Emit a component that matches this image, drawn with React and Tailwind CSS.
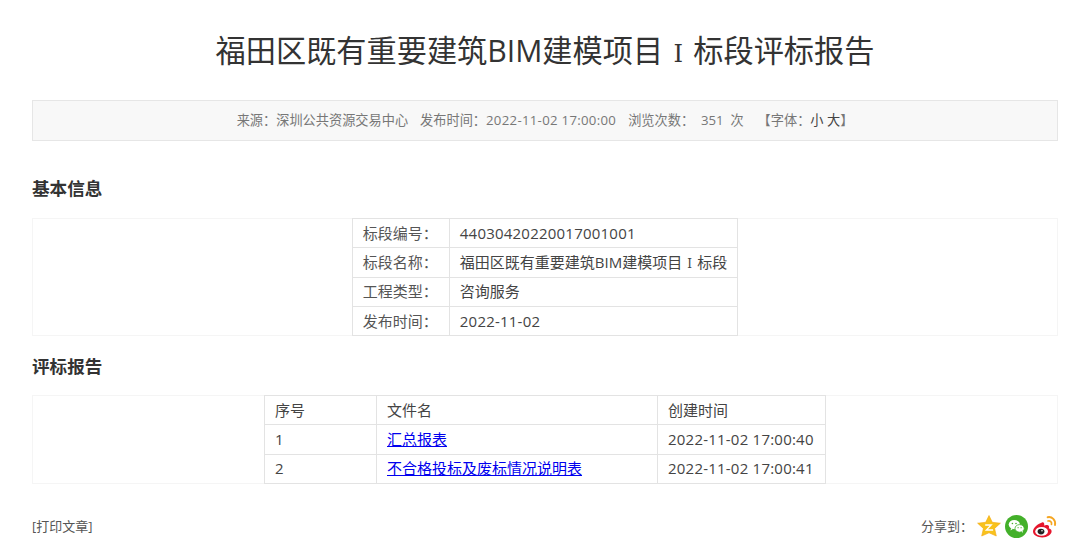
const font = "font-['Open_Sans','Noto_Sans_CJK_SC',sans-serif]";
const roman = "inline-block w-[1.25em] text-center font-['DejaVu_Serif','Liberation_Serif',serif] text-[0.8em]";
const td = "border border-[#e3e3e3] h-[29.25px] p-0 px-[10px] text-left font-normal whitespace-nowrap";
const num = "tracking-[0.22px]";
const C = "\uFF1A";

function QQ() {
  return (
    <svg width="24" height="22" viewBox="0 0 24 22">
      <path d="M12 0.5 L15.3 7.3 L23.4 8.2 L17.6 13.4 L19.3 21 L12 17.8 L4.7 21 L6.4 13.4 L0.6 8.2 L8.7 7.3 Z" fill="#f8c21c" stroke="#f3a712" strokeWidth="0.6" />
      <path d="M8.2 9.2 H15.8 L11 14.2 H16 L16.2 15.8 H7.8 L12.6 10.8 H8.2 Z" fill="#fff" />
    </svg>
  );
}
function WeChat() {
  return (
    <svg width="23" height="23" viewBox="0 0 23 23">
      <circle cx="11.5" cy="11.5" r="11.5" fill="#43b02a" />
      <ellipse cx="9.3" cy="9.6" rx="5.6" ry="4.6" fill="#fff" />
      <path d="M6 13 L5.6 15.4 L8.2 13.8 Z" fill="#fff" />
      <ellipse cx="14.6" cy="13.4" rx="4.6" ry="3.8" fill="#fff" stroke="#43b02a" strokeWidth="0.8" />
      <path d="M16.6 16.4 L17.8 18 L17.6 15.8 Z" fill="#fff" />
      <circle cx="7.4" cy="8.5" r="0.8" fill="#43b02a" />
      <circle cx="11" cy="8.5" r="0.8" fill="#43b02a" />
      <circle cx="13.1" cy="12.7" r="0.6" fill="#43b02a" />
      <circle cx="16.1" cy="12.7" r="0.6" fill="#43b02a" />
    </svg>
  );
}
function Weibo() {
  return (
    <svg width="25" height="23" viewBox="0 0 25 23">
      <path d="M10 7.5 C5.5 9 1 13 1 16.6 C1 20.2 5.6 22.4 10.2 22.4 C15.6 22.4 19.6 19.2 19.6 16.2 C19.6 14.4 18 13.6 16.8 13.2 C17.4 11.8 17.2 10.2 15.4 10 C14.2 9.8 12.8 10.4 12.2 10.6 C12.6 8.6 11.8 6.8 10 7.5 Z" fill="#e6162d" />
      <ellipse cx="9.6" cy="16.4" rx="6.4" ry="4.4" fill="#fff" />
      <ellipse cx="9" cy="16.6" rx="3.4" ry="2.8" fill="#222" />
      <circle cx="10" cy="15.8" r="0.8" fill="#fff" />
      <path d="M15.6 2.2 C20 1.2 24 5 23 10" fill="none" stroke="#f5a623" strokeWidth="1.9" strokeLinecap="round" />
      <path d="M16 6 C18.2 5.4 20 7.2 19.5 9.4" fill="none" stroke="#f5a623" strokeWidth="1.7" strokeLinecap="round" />
    </svg>
  );
}

export default function App() {
  return (
    <div className={`${font} w-[1080px] h-[550px] overflow-hidden bg-white pl-[32px] pr-[22px] text-[#444]`}>
      <h1 className="pt-[30px] h-[100px] text-center text-[30.2px] leading-[42px] font-normal text-[#333]">
        福田区既有重要建筑BIM建模项目<span className={roman}>Ⅰ</span>标段评标报告
      </h1>
      <div className="h-[41px] flex items-center justify-center gap-[12px] bg-[#f8f8f8] border border-[#e6e6e6] text-[13.2px] text-[#777]">
        <span>来源{C}深圳公共资源交易中心</span>
        <span>发布时间{C}<span className="tracking-[0.3px]">2022-11-02 17:00:00</span></span>
        <span className="whitespace-pre">浏览次数{C}  <span>351</span>  次</span>
        <span className="ml-[2px]">【字体{C}<span className="text-[#444]">小 大</span>】</span>
      </div>
      <h2 className="mt-[34px] h-[43px] text-[17.6px] leading-[26px] font-bold text-[#333]">基本信息</h2>
      <div className="flex justify-center border border-[#f5f5f5] text-[15px]">
        <table className="border-collapse -my-px">
          <tbody>
            <tr><td className={`${td} w-[97px] text-[#555]`}>标段编号{C}</td><td className={`${td} w-[288px] ${num}`}>44030420220017001001</td></tr>
            <tr><td className={`${td} text-[#555]`}>标段名称{C}</td><td className={td}>福田区既有重要建筑BIM建模项目<span className={roman}>Ⅰ</span>标段</td></tr>
            <tr><td className={`${td} text-[#555]`}>工程类型{C}</td><td className={td}>咨询服务</td></tr>
            <tr><td className={`${td} text-[#555]`}>发布时间{C}</td><td className={`${td} ${num}`}>2022-11-02</td></tr>
          </tbody>
        </table>
      </div>
      <h2 className="mt-[17px] h-[42px] text-[17.6px] leading-[26px] font-bold text-[#333]">评标报告</h2>
      <div className="flex justify-center border border-[#f5f5f5] text-[15px]">
        <table className="border-collapse -my-px">
          <tbody>
            <tr><td className={`${td} w-[112px]`}>序号</td><td className={`${td} w-[281px]`}>文件名</td><td className={`${td} w-[168px]`}>创建时间</td></tr>
            <tr><td className={td}>1</td><td className={td}><a href="#" className="text-[#0000ee] underline">汇总报表</a></td><td className={`${td} ${num}`}>2022-11-02 17:00:40</td></tr>
            <tr><td className={td}>2</td><td className={td}><a href="#" className="text-[#0000ee] underline">不合格投标及废标情况说明表</a></td><td className={`${td} ${num}`}>2022-11-02 17:00:41</td></tr>
          </tbody>
        </table>
      </div>
      <div className="mt-[31px] pr-[1px] flex items-center justify-between text-[13px] text-[#555]">
        <span>[打印文章]</span>
        <div className="flex items-center gap-[4px]">
          <span>分享到{C}</span>
          <QQ />
          <WeChat />
          <Weibo />
        </div>
      </div>
    </div>
  );
}
